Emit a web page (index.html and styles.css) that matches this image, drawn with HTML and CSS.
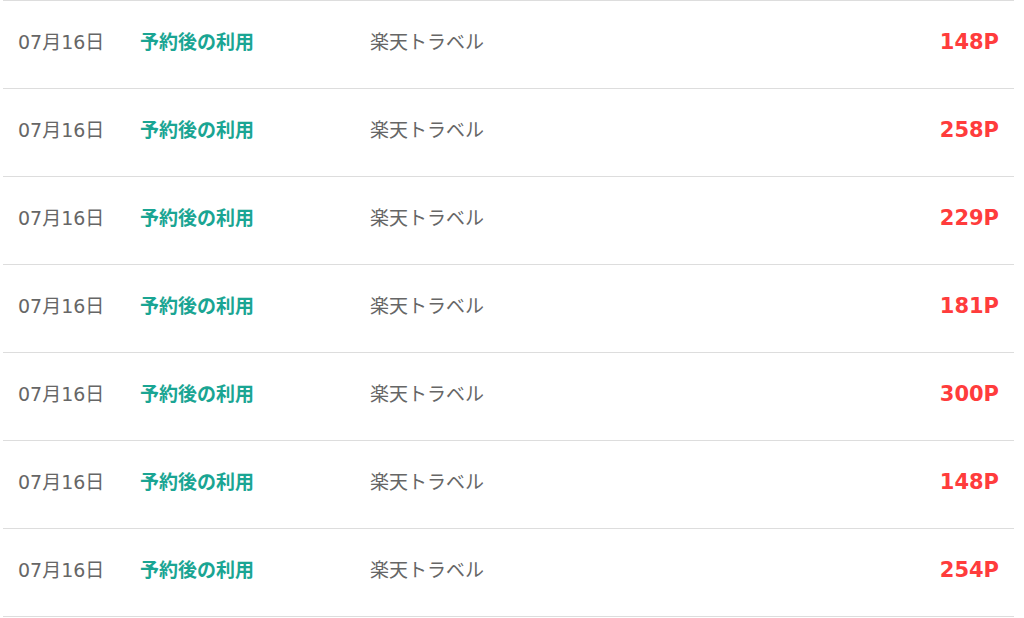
FILE: index.html
```html
<!DOCTYPE html>
<html lang="ja">
<head>
<meta charset="utf-8">
<link rel="stylesheet" href="styles.css">
</head>
<body>
<ul class="list">
  <li class="row"><span class="date">07月16日</span><span class="cat">予約後の利用</span><span class="svc">楽天トラベル</span><span class="pt">148P</span></li>
  <li class="row"><span class="date">07月16日</span><span class="cat">予約後の利用</span><span class="svc">楽天トラベル</span><span class="pt">258P</span></li>
  <li class="row"><span class="date">07月16日</span><span class="cat">予約後の利用</span><span class="svc">楽天トラベル</span><span class="pt">229P</span></li>
  <li class="row"><span class="date">07月16日</span><span class="cat">予約後の利用</span><span class="svc">楽天トラベル</span><span class="pt">181P</span></li>
  <li class="row"><span class="date">07月16日</span><span class="cat">予約後の利用</span><span class="svc">楽天トラベル</span><span class="pt">300P</span></li>
  <li class="row"><span class="date">07月16日</span><span class="cat">予約後の利用</span><span class="svc">楽天トラベル</span><span class="pt">148P</span></li>
  <li class="row"><span class="date">07月16日</span><span class="cat">予約後の利用</span><span class="svc">楽天トラベル</span><span class="pt">254P</span></li>
</ul>
</body>
</html>
```
FILE: styles.css
```css
html, body {
  margin: 0;
  padding: 0;
  background: #fff;
}
body {
  font-family: "DejaVu Sans", "Noto Sans CJK JP", sans-serif;
}
.list {
  list-style: none;
  margin: 0 10px 0 3px;
  padding: 0;
  border-top: 1px solid #dddddd;
}
.row {
  display: flex;
  align-items: center;
  height: 82px;
  border-bottom: 1px solid #dddddd;
  padding: 0 15px 5px;
  font-size: 19px;
  line-height: 24px;
}
.date {
  width: 122px;
  color: #666666;
}
.cat {
  width: 230px;
  color: #1aa593;
  font-weight: bold;
}
.svc {
  color: #666666;
  flex: 1;
}
.pt {
  color: #ff3c3c;
  font-weight: bold;
  font-size: 21px;
}
```
